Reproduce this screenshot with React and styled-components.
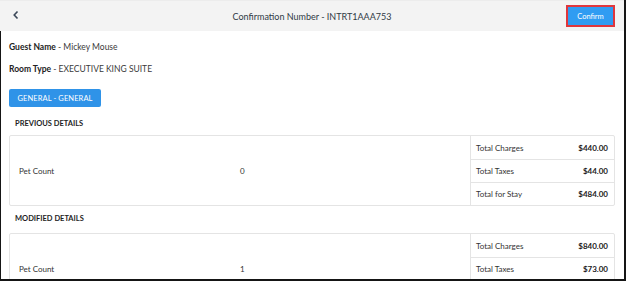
import styled, { createGlobalStyle } from 'styled-components'

const GlobalStyle = createGlobalStyle`
  body {
    margin: 0;
    background: #ffffff;
    font-family: Lato, "Open Sans", Arial, sans-serif;
    color: #333333;
  }
`

const Frame = styled.div`
  width: 626px;
  height: 281px;
  box-sizing: border-box;
  border-right: 2px solid #151515;
  border-bottom: 2px solid #151515;
  overflow: hidden;
  display: flex;
  flex-direction: column;
`

const Header = styled.header`
  height: 31px;
  flex-shrink: 0;
  background: #f3f3f3;
  border-top: 1px solid #ececec;
  box-sizing: border-box;
  display: grid;
  grid-template-columns: 1fr auto 1fr;
  align-items: center;
`

const BackButton = styled.button`
  justify-self: start;
  margin-left: 10px;
  width: 12px;
  height: 14px;
  padding: 0;
  border: none;
  background: none;
  display: flex;
  align-items: center;
  justify-content: center;
  margin-top: -2px;
`

const Title = styled.h1`
  margin: 0;
  font-size: 9px;
  font-weight: 400;
  color: #2f3a45;
`

const ConfirmButton = styled.button`
  justify-self: end;
  margin-right: 9px;
  width: 49px;
  height: 22px;
  box-sizing: border-box;
  background: #2f9cf2;
  border: 2px solid #e0363c;
  color: #ffffff;
  font-family: inherit;
  font-size: 7.5px;
  padding: 0;
`

const Body = styled.main`
  flex: 1;
  min-height: 0;
  overflow: hidden;
  border-left: 1px solid #151515;
  padding: 10px 9px 0 8px;
`

const InfoLine = styled.p`
  margin: 0 0 10px;
  height: 12px;
  line-height: 12px;
  font-size: 8.5px;
  color: #3a3a3a;

  b {
    font-weight: 700;
    color: #222222;
  }
`

const RoomTag = styled.button`
  display: block;
  margin-top: 14px;
  width: 92px;
  height: 18px;
  padding: 0;
  border: none;
  border-radius: 2px;
  background: #2f93e8;
  color: #ffffff;
  font-family: inherit;
  font-size: 7.5px;
  letter-spacing: 0.1px;
`

const SectionTitle = styled.h2`
  margin: ${p => p.$top}px 0 0;
  padding-left: 6px;
  height: 12px;
  line-height: 12px;
  font-size: 7.5px;
  font-weight: 700;
  color: #1e1e1e;
`

const Card = styled.div`
  margin-top: ${p => p.$top}px;
  width: 606px;
  box-sizing: border-box;
  border: 1px solid #e4e4e4;
  border-radius: 2px;
  display: grid;
  grid-template-columns: 1fr 144px;
`

const ItemGrid = styled.div`
  display: grid;
  grid-template-columns: 1fr 1fr;
  align-items: center;
  padding: 0 9px;
  font-size: 8px;
  color: #333333;
`

const Totals = styled.div`
  border-left: 1px solid #e4e4e4;
`

const TotalRow = styled.div`
  height: 23px;
  box-sizing: border-box;
  display: flex;
  align-items: center;
  justify-content: space-between;
  padding: 0 6px 0 5px;
  font-size: 8px;
  border-top: ${p => (p.$first ? 'none' : '1px solid #e4e4e4')};

  span:last-child {
    font-weight: 700;
    color: #222222;
  }
`

const ChevronLeft = () => (
  <svg width="8" height="10" viewBox="0 0 8 10">
    <path d="M5.5 1.5 L2.2 5 L5.5 8.5" fill="none" stroke="#3a4758" strokeWidth="1.6" />
  </svg>
)

const sections = [
  {
    title: 'PREVIOUS DETAILS',
    titleTop: 11,
    cardTop: 5,
    pets: '0',
    totals: [
      ['Total Charges', '$440.00'],
      ['Total Taxes', '$44.00'],
      ['Total for Stay', '$484.00'],
    ],
  },
  {
    title: 'MODIFIED DETAILS',
    titleTop: 7,
    cardTop: 8,
    pets: '1',
    totals: [
      ['Total Charges', '$840.00'],
      ['Total Taxes', '$73.00'],
      ['Total for Stay', '$913.00'],
    ],
  },
]

export default function App() {
  return (
    <>
      <GlobalStyle />
      <Frame>
        <Header>
          <BackButton aria-label="Back">
            <ChevronLeft />
          </BackButton>
          <Title>Confirmation Number - INTRT1AAA753</Title>
          <ConfirmButton>Confirm</ConfirmButton>
        </Header>
        <Body>
          <InfoLine>
            <b>Guest Name</b> - Mickey Mouse
          </InfoLine>
          <InfoLine>
            <b>Room Type</b> - EXECUTIVE KING SUITE
          </InfoLine>
          <RoomTag>GENERAL - GENERAL</RoomTag>
          {sections.map(s => (
            <div key={s.title}>
              <SectionTitle $top={s.titleTop}>{s.title}</SectionTitle>
              <Card $top={s.cardTop}>
                <ItemGrid>
                  <span>Pet Count</span>
                  <span>{s.pets}</span>
                </ItemGrid>
                <Totals>
                  {s.totals.map(([label, value], i) => (
                    <TotalRow key={label} $first={i === 0}>
                      <span>{label}</span>
                      <span>{value}</span>
                    </TotalRow>
                  ))}
                </Totals>
              </Card>
            </div>
          ))}
        </Body>
      </Frame>
    </>
  )
}
